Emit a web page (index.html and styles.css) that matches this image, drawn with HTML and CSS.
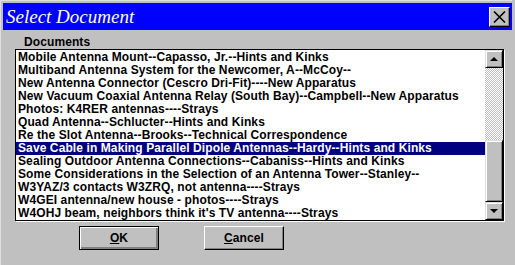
FILE: index.html
```html
<!DOCTYPE html>
<html lang="en">

<head>
    <meta charset="UTF-8">
    <title>Select Document</title>
    <link rel="stylesheet" href="styles.css">
</head>

<body>
    <div class="dialog">
        <div class="titlebar">
            <span class="title">Select Document</span>
            <button class="close">
                <svg width="13" height="12" viewBox="0 0 13 12">
                    <path d="M1 0.5 L12 11.5 M12 0.5 L1 11.5" stroke="#000" stroke-width="1.6" fill="none"/>
                </svg>
            </button>
        </div>
        <div class="content">
            <div class="label">Documents</div>
            <div class="listbox">
                <ul class="items">
                    <li class="item">Mobile Antenna Mount--Capasso, Jr.--Hints and Kinks</li>
                    <li class="item">Multiband Antenna System for the Newcomer, A--McCoy--</li>
                    <li class="item">New Antenna Connector (Cescro Dri-Fit)----New Apparatus</li>
                    <li class="item">New Vacuum Coaxial Antenna Relay (South Bay)--Campbell--New Apparatus</li>
                    <li class="item">Photos: K4RER antennas----Strays</li>
                    <li class="item">Quad Antenna--Schlucter--Hints and Kinks</li>
                    <li class="item">Re the Slot Antenna--Brooks--Technical Correspondence</li>
                    <li class="item selected">Save Cable in Making Parallel Dipole Antennas--Hardy--Hints and Kinks</li>
                    <li class="item">Sealing Outdoor Antenna Connections--Cabaniss--Hints and Kinks</li>
                    <li class="item">Some Considerations in the Selection of an Antenna Tower--Stanley--</li>
                    <li class="item">W3YAZ/3 contacts W3ZRQ, not antenna----Strays</li>
                    <li class="item">W4GEI antenna/new house - photos----Strays</li>
                    <li class="item">W4OHJ beam, neighbors think it's TV antenna----Strays</li>
                </ul>
                <div class="scrollbar">
                    <div class="arrow"><span class="tri up"></span></div>
                    <div class="track"></div>
                    <div class="thumb"></div>
                    <div class="arrow"><span class="tri down"></span></div>
                </div>
            </div>
            <div class="buttons">
                <button class="btn default"><u>O</u>K</button>
                <button class="btn"><u>C</u>ancel</button>
            </div>
        </div>
    </div>
</body>

</html>
```

FILE: styles.css
```css
* {
    padding: 0;
    margin: 0;
    box-sizing: border-box;
}

body {
    width: 515px;
    height: 265px;
    overflow: hidden;
    background-color: #c0c0c0;
    font-family: "Liberation Sans", Arial, sans-serif;
    font-size: 12px;
    font-weight: bold;
    letter-spacing: 0.1px;
}

.dialog {
    width: 512px;
    height: 265px;
    padding: 2px 0 0 2px;
    border-left: 1px solid #dfdfdf;
    border-top: 1px solid #dfdfdf;
}

.titlebar {
    height: 27px;
    background-color: #0000ff;
    display: flex;
    align-items: center;
    justify-content: space-between;
    padding: 0 2px 0 3px;
}

.title {
    color: #fff;
    font-family: "Liberation Serif", serif;
    font-style: italic;
    font-weight: normal;
    font-size: 19px;
    letter-spacing: 0;
}

.close {
    width: 21px;
    height: 20px;
    background-color: #c0c0c0;
    border: 1px solid;
    border-color: #fff #000 #000 #fff;
    box-shadow: inset -1px -1px 0 #808080;
    display: flex;
    align-items: center;
    justify-content: center;
}

.content {
    padding: 6px 0 0 12px;
}

.label {
    height: 13px;
    line-height: 13px;
    padding-left: 9px;
}

.listbox {
    width: 489px;
    height: 172px;
    display: flex;
    background-color: #fff;
    border: 1px solid #000;
    box-shadow: 1px 1px 0 #fff;
}

.items {
    flex: 1;
    list-style: none;
    padding-top: 1px;
}

.item {
    height: 13px;
    line-height: 13px;
    padding-left: 2px;
    white-space: nowrap;
    overflow: hidden;
    color: #000;
}

.item.selected {
    background-color: #000080;
    color: #fff;
}

.scrollbar {
    width: 18px;
    display: flex;
    flex-direction: column;
}

.arrow {
    height: 18px;
    background-color: #c0c0c0;
    border: 1px solid;
    border-color: #dfdfdf #000 #000 #dfdfdf;
    box-shadow: inset 1px 1px 0 #fff, inset -1px -1px 0 #808080;
    display: flex;
    align-items: center;
    justify-content: center;
}

.tri {
    width: 0;
    height: 0;
    border-left: 4px solid transparent;
    border-right: 4px solid transparent;
}

.tri.up {
    border-bottom: 4px solid #000;
}

.tri.down {
    border-top: 4px solid #000;
}

.track {
    flex: 1;
    background: repeating-conic-gradient(#fff 0 25%, #c0c0c0 0 50%) 0 0 / 2px 2px;
}

.thumb {
    height: 62px;
    background-color: #c0c0c0;
    border: 1px solid;
    border-color: #dfdfdf #000 #000 #dfdfdf;
    box-shadow: inset 1px 1px 0 #fff, inset -1px -1px 0 #808080;
}

.buttons {
    display: flex;
    gap: 45px;
    padding: 5px 0 0 64px;
}

.btn {
    width: 80px;
    height: 24px;
    background-color: #c0c0c0;
    font-family: "Liberation Sans", Arial, sans-serif;
    font-size: 12px;
    font-weight: bold;
    letter-spacing: 0.1px;
    color: #000;
    border: 1px solid;
    border-color: #fff #000 #000 #fff;
    box-shadow: inset -1px -1px 0 #808080;
}

.btn.default {
    border: 1px solid #000;
    box-shadow: inset 1px 1px 0 #fff, inset -2px -2px 0 #808080;
}
```
